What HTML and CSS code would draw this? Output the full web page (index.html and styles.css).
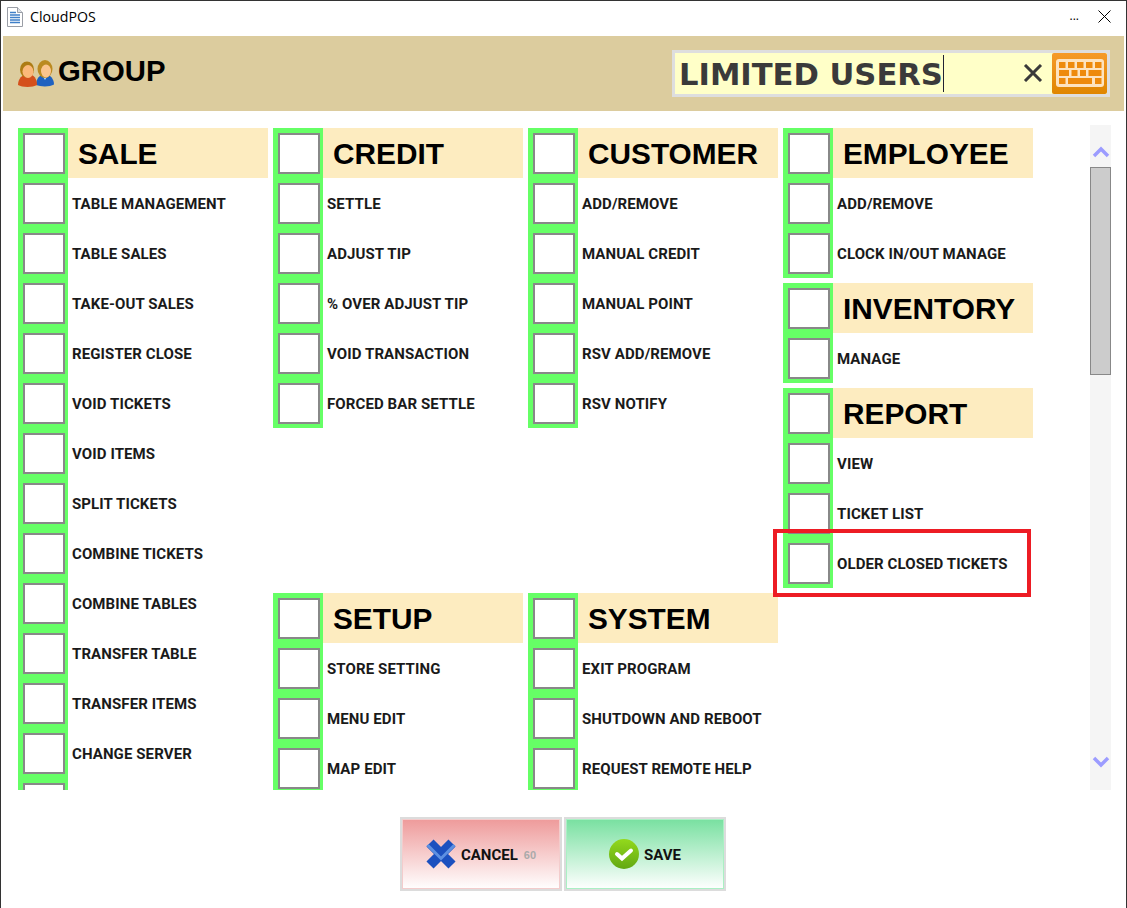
FILE: index.html
```html
<!DOCTYPE html>
<html lang="en">
<head>
<meta charset="utf-8">
<title>CloudPOS</title>
<link rel="stylesheet" href="styles.css">
</head>
<body>
<div class="window">
  <div class="titlebar">
    <svg class="doc-icon" width="16" height="20" viewBox="0 0 16 20"><path d="M.5 .5H10.500L15.500 5.500V19.500H.5Z" fill="#fff" stroke="#9a9ea6"/><path d="M10.500 .5V5.500H15.500" fill="#dfe3ea" stroke="#9a9ea6"/><path d="M3 5.500h6M3 8h10M3 10.500h10M3 13h10M3 15.500h10" stroke="#3f7fc8" stroke-width="1.500"/></svg>
    <span class="app-name">CloudPOS</span>
    <span class="min-dots">...</span>
    <svg class="close-x" width="13" height="13" viewBox="0 0 13 13"><path d="M.5 .5L12.500 12.500M12.500 .5L.5 12.500" stroke="#000" stroke-width="1"/></svg>
  </div>

  <header class="group-bar">
    <div class="group-title">
      <svg class="people" width="38" height="28" viewBox="0 0 38 28">
        <path d="M19 25c5 2 14 2 18-.5 0-6-4-10-9-10s-9 4-9 10.500z" fill="#1f62c0"/>
        <path d="M25 15l3 5 3-5z" fill="#bcd4f0"/>
        <ellipse cx="28" cy="9" rx="7.500" ry="9" fill="#bb8a20"/>
        <ellipse cx="29" cy="11" rx="5" ry="6.500" fill="#fbc48d"/>
        <path d="M1 25c4 2.500 15 2.500 19 0 0-6-3-11-9-11S1 19 1 25z" fill="#d4501c"/>
        <ellipse cx="10" cy="9.500" rx="7" ry="8" fill="#ad7c14"/>
        <ellipse cx="11" cy="11.500" rx="5.500" ry="6.500" fill="#fbb87a"/>
      </svg>
      <span>GROUP</span>
    </div>
    <div class="search">
      <span class="search-text">LIMITED USERS</span>
      <span class="caret"></span>
      <svg class="clear-x" width="20" height="18" viewBox="0 0 20 18"><path d="M2 1L18 17M18 1L2 17" stroke="#3a3a3a" stroke-width="3"/></svg>
      <button class="kbd-btn" type="button" aria-label="Keyboard">
        <svg width="48" height="28" viewBox="0 0 48 28">
          <rect width="48" height="28" rx="3" fill="#fde3c0"/>
          <g fill="#ee8a0c">
            <rect x="3" y="3" width="6.500" height="6"/><rect x="12" y="3" width="6.500" height="6"/><rect x="21" y="3" width="6.500" height="6"/><rect x="30" y="3" width="6.500" height="6"/><rect x="39" y="3" width="6.500" height="6"/>
            <rect x="3" y="11" width="10" height="6"/><rect x="15.500" y="11" width="6" height="6"/><rect x="24" y="11" width="6" height="6"/><rect x="32.500" y="11" width="13" height="6"/>
            <rect x="3" y="19" width="6.500" height="6"/><rect x="12" y="19" width="24" height="6"/><rect x="39" y="19" width="6.500" height="6"/>
          </g>
        </svg>
      </button>
    </div>
  </header>

  <main class="content">
    <div class="list">
      <div class="col">
        <section class="sec">
          <div class="row head"><span class="chk"><i class="box"></i></span><h2>SALE</h2></div>
          <div class="row"><span class="chk"><i class="box"></i></span><span class="label">TABLE MANAGEMENT</span></div>
          <div class="row"><span class="chk"><i class="box"></i></span><span class="label">TABLE SALES</span></div>
          <div class="row"><span class="chk"><i class="box"></i></span><span class="label">TAKE-OUT SALES</span></div>
          <div class="row"><span class="chk"><i class="box"></i></span><span class="label">REGISTER CLOSE</span></div>
          <div class="row"><span class="chk"><i class="box"></i></span><span class="label">VOID TICKETS</span></div>
          <div class="row"><span class="chk"><i class="box"></i></span><span class="label">VOID ITEMS</span></div>
          <div class="row"><span class="chk"><i class="box"></i></span><span class="label">SPLIT TICKETS</span></div>
          <div class="row"><span class="chk"><i class="box"></i></span><span class="label">COMBINE TICKETS</span></div>
          <div class="row"><span class="chk"><i class="box"></i></span><span class="label">COMBINE TABLES</span></div>
          <div class="row"><span class="chk"><i class="box"></i></span><span class="label">TRANSFER TABLE</span></div>
          <div class="row"><span class="chk"><i class="box"></i></span><span class="label">TRANSFER ITEMS</span></div>
          <div class="row"><span class="chk"><i class="box"></i></span><span class="label">CHANGE SERVER</span></div>
          <div class="row"><span class="chk"><i class="box"></i></span></div>
        </section>
      </div>
      <div class="col">
        <section class="sec">
          <div class="row head"><span class="chk"><i class="box"></i></span><h2>CREDIT</h2></div>
          <div class="row"><span class="chk"><i class="box"></i></span><span class="label">SETTLE</span></div>
          <div class="row"><span class="chk"><i class="box"></i></span><span class="label">ADJUST TIP</span></div>
          <div class="row"><span class="chk"><i class="box"></i></span><span class="label">% OVER ADJUST TIP</span></div>
          <div class="row"><span class="chk"><i class="box"></i></span><span class="label">VOID TRANSACTION</span></div>
          <div class="row"><span class="chk"><i class="box"></i></span><span class="label">FORCED BAR SETTLE</span></div>
        </section>
        <section class="sec lower">
          <div class="row head"><span class="chk"><i class="box"></i></span><h2>SETUP</h2></div>
          <div class="row"><span class="chk"><i class="box"></i></span><span class="label">STORE SETTING</span></div>
          <div class="row"><span class="chk"><i class="box"></i></span><span class="label">MENU EDIT</span></div>
          <div class="row"><span class="chk"><i class="box"></i></span><span class="label">MAP EDIT</span></div>
        </section>
      </div>
      <div class="col">
        <section class="sec">
          <div class="row head"><span class="chk"><i class="box"></i></span><h2>CUSTOMER</h2></div>
          <div class="row"><span class="chk"><i class="box"></i></span><span class="label">ADD/REMOVE</span></div>
          <div class="row"><span class="chk"><i class="box"></i></span><span class="label">MANUAL CREDIT</span></div>
          <div class="row"><span class="chk"><i class="box"></i></span><span class="label">MANUAL POINT</span></div>
          <div class="row"><span class="chk"><i class="box"></i></span><span class="label">RSV ADD/REMOVE</span></div>
          <div class="row"><span class="chk"><i class="box"></i></span><span class="label">RSV NOTIFY</span></div>
        </section>
        <section class="sec lower">
          <div class="row head"><span class="chk"><i class="box"></i></span><h2>SYSTEM</h2></div>
          <div class="row"><span class="chk"><i class="box"></i></span><span class="label">EXIT PROGRAM</span></div>
          <div class="row"><span class="chk"><i class="box"></i></span><span class="label">SHUTDOWN AND REBOOT</span></div>
          <div class="row"><span class="chk"><i class="box"></i></span><span class="label">REQUEST REMOTE HELP</span></div>
        </section>
      </div>
      <div class="col stacked">
        <section class="sec">
          <div class="row head"><span class="chk"><i class="box"></i></span><h2>EMPLOYEE</h2></div>
          <div class="row"><span class="chk"><i class="box"></i></span><span class="label">ADD/REMOVE</span></div>
          <div class="row"><span class="chk"><i class="box"></i></span><span class="label">CLOCK IN/OUT MANAGE</span></div>
        </section>
        <section class="sec">
          <div class="row head"><span class="chk"><i class="box"></i></span><h2>INVENTORY</h2></div>
          <div class="row"><span class="chk"><i class="box"></i></span><span class="label">MANAGE</span></div>
        </section>
        <section class="sec">
          <div class="row head"><span class="chk"><i class="box"></i></span><h2>REPORT</h2></div>
          <div class="row"><span class="chk"><i class="box"></i></span><span class="label">VIEW</span></div>
          <div class="row"><span class="chk"><i class="box"></i></span><span class="label">TICKET LIST</span></div>
          <div class="row"><span class="chk"><i class="box"></i></span><span class="label">OLDER CLOSED TICKETS</span></div>
        </section>
      </div>
    </div>
    <div class="scrollbar">
      <svg class="arrow up" width="18" height="12" viewBox="0 0 18 12"><path d="M2 10L9 3L16 10" fill="none" stroke="#9c9cff" stroke-width="3.500"/></svg>
      <div class="thumb"></div>
      <svg class="arrow down" width="18" height="12" viewBox="0 0 18 12"><path d="M2 2L9 9L16 2" fill="none" stroke="#9c9cff" stroke-width="3.500"/></svg>
    </div>
  </main>

  <footer class="actions">
    <button class="btn cancel" type="button">
      <svg class="x-icon" width="30" height="30" viewBox="0 0 30 30">
        <path d="M4 4L26 26M26 4L4 26" stroke="#1b50bf" stroke-width="10"/>
        <path d="M1.500 6L15 19.500L28.500 6" fill="none" stroke="#5d90e2" stroke-width="3"/>
      </svg>
      <span class="btn-text">CANCEL</span><span class="count">60</span>
    </button>
    <button class="btn save" type="button">
      <svg width="30" height="30" viewBox="0 0 30 30">
        <defs><linearGradient id="okfill" x1="0" y1="0" x2="0" y2="1"><stop offset="0" stop-color="#93d91c"/><stop offset="1" stop-color="#62a812"/></linearGradient></defs>
        <circle cx="15" cy="15" r="15" fill="url(#okfill)"/>
        <path d="M8 15l5 4.500 9-8" fill="none" stroke="#fff" stroke-width="4" stroke-linecap="round"/>
      </svg>
      <span class="btn-text">SAVE</span>
    </button>
  </footer>

  <div class="highlight"></div>
</div>
</body>
</html>
```

FILE: styles.css
```css
* { box-sizing: border-box; }
html, body { margin: 0; padding: 0; background: #fff; }
body { width: 1127px; height: 908px; overflow: hidden; font-family: "Liberation Sans", Arial, sans-serif; }

.window {
  position: relative;
  width: 1127px;
  height: 908px;
  background: #fff;
  border: 1px solid #333;
  border-bottom: 0;
  display: flex;
  flex-direction: column;
  padding: 0 1px;
}

.titlebar {
  height: 34px;
  display: flex;
  align-items: center;
  padding: 0 14px 3px 5px;
  flex: none;
}
.doc-icon { flex: none; }
.app-name { margin-left: 7px; font: 14.200px "Open Sans", sans-serif; color: #000; flex: 1; }
.min-dots { font: 12px "Open Sans", sans-serif; color: #000; margin-right: 19px; position: relative; top: -1px; }

.group-bar {
  height: 75px;
  margin: 1px 1px 0 1px;
  flex: none;
  background: #dccc9e;
  display: flex;
  align-items: center;
  justify-content: space-between;
  padding: 0 14px 0 14px;
}
.group-title { display: flex; align-items: center; font-size: 29.300px; font-weight: 700; color: #000; padding-bottom: 5px; }
.people { flex: none; margin-right: 3px; position: relative; top: 3px; }

.search {
  width: 438px;
  height: 47px;
  border: 3px solid #dedede;
  background: #ffffc8;
  display: flex;
  align-items: center;
  padding-left: 4px;
  margin-top: -1px;
}
.search-text { font: 700 30.600px "DejaVu Sans", sans-serif; color: #3a3a3a; white-space: nowrap; padding-top: 3px; }
.caret { width: 1px; height: 37px; background: #223; }
.clear-x { margin-left: auto; margin-right: 9px; flex: none; }
.kbd-btn {
  width: 55px;
  height: 41px;
  padding: 0;
  border: 0;
  border-radius: 2px;
  background: linear-gradient(#f59a2a, #e08600);
  display: flex;
  align-items: center;
  justify-content: center;
  flex: none;
}

.content { display: flex; flex: none; height: 665px; margin-top: 14px; padding-left: 16px; }
.list {
  width: 1072px;
  height: 662px;
  margin-top: 3px;
  overflow: hidden;
  display: flex;
  gap: 5px;
  flex: none;
}
.col { width: 250px; flex: none; }
.stacked { display: flex; flex-direction: column; gap: 5px; }
.lower { margin-top: 165px; }

.row { display: flex; height: 50px; align-items: center; }
.chk { width: 50px; height: 50px; flex: none; background: #66ff66; padding: 5px 0 0 5px; }
.box { display: block; width: 42px; height: 41px; background: #fff; border: 2px solid #888; }
.head { background: #fdecc0; }
.head h2 { margin: 0 0 0 10px; padding-top: 2px; font-size: 29.800px; font-weight: 700; color: #000; }
.label { margin-left: 4px; padding-top: 2px; font-family: Roboto, sans-serif; font-size: 15px; font-weight: 700; letter-spacing: .1px; color: #1a1a1a; white-space: nowrap; }

.scrollbar {
  width: 21px;
  background: #f5f5f5;
  display: flex;
  flex-direction: column;
  align-items: center;
  flex: none;
}
.arrow { flex: none; }
.arrow.up { margin-top: 21px; margin-bottom: 9px; }
.thumb { width: 21px; height: 208px; background: #ccc; border: 1px solid #888; flex: none; }
.arrow.down { margin-top: auto; margin-bottom: 22px; }

.actions { display: flex; justify-content: center; gap: 2px; margin-top: 27px; padding-right: 1px; }
.btn {
  width: 162px;
  height: 74px;
  padding: 0;
  display: flex;
  align-items: center;
  justify-content: center;
  font-family: inherit;
  border: 2px solid #dcdcdc;
}
.cancel { background: linear-gradient(#ee9a9a, #fff); box-shadow: inset 0 0 0 1px #f3cccc; }
.save { background: linear-gradient(#78e0a0, #fff); box-shadow: inset 0 0 0 1px #aaf0c4; }
.x-icon { margin-left: 2px; }
.btn-text { padding-top: 2px; font-family: Roboto, sans-serif; font-size: 15px; font-weight: 700; color: #111; margin-left: 5px; }
.count { padding-top: 2px; font-size: 11px; font-weight: 700; color: #aaa; margin-left: 6px; margin-right: 2px; }

.highlight {
  position: absolute;
  left: 772px;
  top: 528px;
  width: 258px;
  height: 68px;
  border: 4px solid #ed1c24;
  pointer-events: none;
}
```
